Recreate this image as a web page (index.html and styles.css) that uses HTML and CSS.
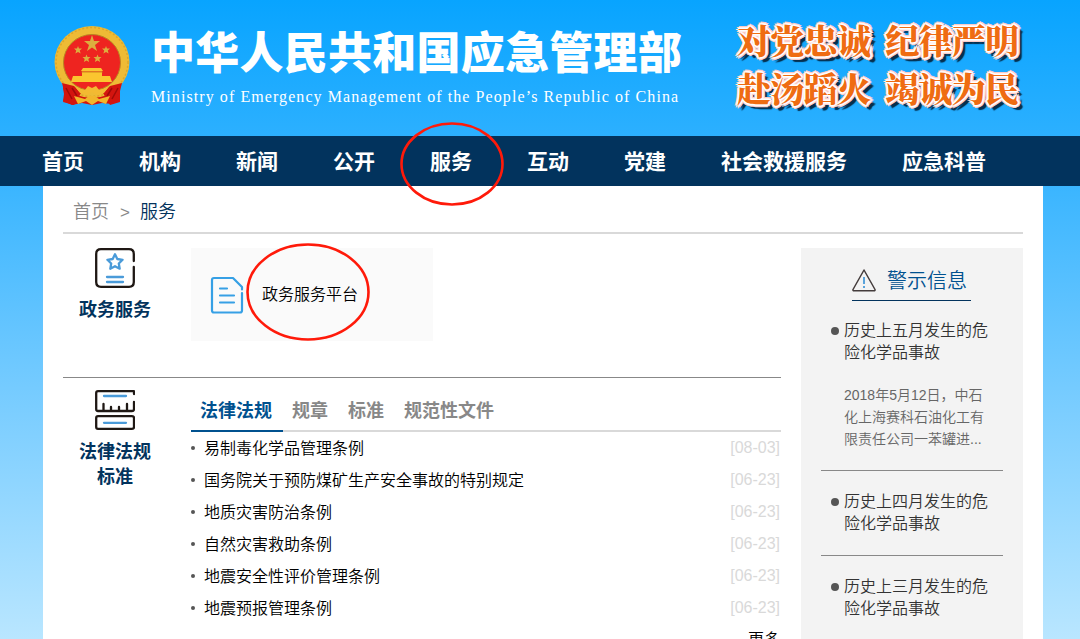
FILE: index.html
```html
<!DOCTYPE html>
<html lang="zh-CN">
<head>
<meta charset="utf-8">
<title>中华人民共和国应急管理部</title>
<link rel="stylesheet" href="styles.css">
</head>
<body>
<header class="header">
  <svg class="emblem" viewBox="0 0 76 80" width="76" height="80">
    <path d="M9 51L67 51L66 61L66 75L58 78L48 77L38 79L28 77L18 79L9 75L10 68L9 62Z" fill="#d3150f"/>
    <ellipse cx="38" cy="36" rx="37.500" ry="36" fill="#eebb35"/>
    <ellipse cx="38" cy="36" rx="36" ry="34.500" fill="none" stroke="#dca52a" stroke-width="1.500" stroke-dasharray="2 2"/>
    <ellipse cx="38" cy="36.500" rx="28.500" ry="28" fill="#ee2420" stroke="#b98521" stroke-width="1"/>
    <path d="M8 57L20 60L27 67L20 79L9 76L11 69ZM68 57L56 60L49 67L56 79L66 76L65 69Z" fill="#d3150f"/>
    <path d="M12 62L18 73M18 62L23 70M64 62L58 73M58 62L53 70" stroke="#a10b08" stroke-width="1.500"/>
    <g fill="#dcae3f">
      <path d="M38 9L40 15L46 15L41 19L43 25L38 21.500L33 25L35 19L30 15L36 15Z"/>
      <path d="M24 20l1 2.500h3l-2.200 2 .8 3-2.600-1.600-2.600 1.600.8-3-2.200-2h3zM52 20l1 2.500h3l-2.200 2 .8 3-2.600-1.600-2.600 1.600.8-3-2.200-2h3zM32.500 28.500l1 2.500h3l-2.200 2 .8 3-2.600-1.600-2.600 1.600.8-3-2.200-2h3zM43.500 28.500l1 2.500h3l-2.200 2 .8 3-2.600-1.600-2.600 1.600.8-3-2.200-2h3z"/>
    </g>
    <path d="M29 42H47L49 45H27ZM28 45.500H48V50H56L58 56H17L19 50H28Z" fill="#fbc52f"/>
    <path d="M27 46H49" stroke="#c67a1b" stroke-width=".8"/>
    <path d="M22 62L31 64L34 60L38 62L42 60L45 64L54 62L50 67L43 69L38 66L33 69L26 67Z" fill="#f3ba32"/>
    <path d="M20 70L31 73L35 70H41L45 73L56 70L52 78L44 75L38 79L32 75L24 78Z" fill="#f2b62c"/>
  </svg>
  <div class="brand">
    <h1 class="brand-name">中华人民共和国应急管理部</h1>
    <p class="brand-en">Ministry of Emergency Management of the People’s Republic of China</p>
  </div>
  <div class="slogan">
    <div class="slogan-row"><span>对党忠诚</span><span>纪律严明</span></div>
    <div class="slogan-row"><span>赴汤蹈火</span><span>竭诚为民</span></div>
  </div>
</header>
<nav class="nav">
  <a>首页</a><a>机构</a><a>新闻</a><a>公开</a><a class="marked">服务<svg class="ring ring-nav" viewBox="0 0 104 84" width="104" height="84"><ellipse cx="52" cy="42" rx="50.500" ry="40.500"/></svg></a><a>互动</a><a>党建</a><a>社会救援服务</a><a>应急科普</a>
</nav>
<main class="page">
  <div class="crumbs"><span>首页</span><span class="sep">&gt;</span><span class="here">服务</span></div>
  <div class="columns">
    <div class="content">
      <section class="block block-service">
        <div class="block-label">
          <svg viewBox="0 0 40 40" width="40" height="40" fill="none" stroke-width="2.300" stroke-linecap="round">
            <path d="M38.800 13V6Q38.800 1.200 34 1.200H6Q1.200 1.200 1.200 6V34Q1.200 38.800 6 38.800H34Q38.800 38.800 38.800 34V19" stroke="#1f1814"/>
            <path d="M20 6.300L22.300 11L27.600 11.800L23.800 15.500L24.700 20.700L20 18.200L15.300 20.700L16.200 15.500L12.400 11.800L17.700 11ZM12 29H28M12 34H28" stroke="#4a9bd9" stroke-linejoin="round"/>
          </svg>
          <span>政务服务</span>
        </div>
        <a class="card">
          <svg viewBox="0 0 34 38" width="34" height="38" fill="none" stroke="#36a0e5" stroke-width="2.200" stroke-linecap="round" stroke-linejoin="round">
            <path d="M32 13.500V11L23 2H4Q2 2 2 4V34.500Q2 36.500 4 36.500H30Q32 36.500 32 34.500V17M10 12.500H17M10 19.500H24M10 26.500H24"/>
          </svg>
          <span class="marked">政务服务平台<svg class="ring ring-card" viewBox="0 0 124 98" width="124" height="98"><ellipse cx="62" cy="49" rx="60.500" ry="47.500"/></svg></span>
        </a>
      </section>
      <section class="block block-law">
        <div class="block-label">
          <svg viewBox="0 0 40 40" width="40" height="40" fill="none" stroke-width="2.300" stroke-linecap="round" stroke-linejoin="round">
            <path d="M39 4V1.200H3Q1.200 1.200 1.200 3V19Q1.200 21 3 21H37Q39 21 39 19V12M8.500 14V20M16 17V20M24 17V20M32 14V20M3 26.200H37Q39 26.200 39 28V37Q39 38.800 37 38.800H3Q1.200 38.800 1.200 37V28Q1.200 26.200 3 26.200Z" stroke="#1f1814"/>
            <path d="M9 6H31M9 32.800H31" stroke="#4a9bd9"/>
          </svg>
          <span>法律法规<br>标准</span>
        </div>
        <div class="law">
          <div class="tabs"><a class="active">法律法规</a><a>规章</a><a>标准</a><a>规范性文件</a></div>
          <ul class="list">
            <li><a>易制毒化学品管理条例</a><time>[08-03]</time></li>
            <li><a>国务院关于预防煤矿生产安全事故的特别规定</a><time>[06-23]</time></li>
            <li><a>地质灾害防治条例</a><time>[06-23]</time></li>
            <li><a>自然灾害救助条例</a><time>[06-23]</time></li>
            <li><a>地震安全性评价管理条例</a><time>[06-23]</time></li>
            <li><a>地震预报管理条例</a><time>[06-23]</time></li>
          </ul>
          <a class="more">更多</a>
        </div>
      </section>
    </div>
    <aside class="side">
      <h2 class="side-title">
        <svg viewBox="0 0 24 23" width="24" height="23" fill="none" stroke-width="1.500" stroke-linejoin="round"><path d="M12 1L23 20.500Q23.300 21.800 22 21.800H2Q.7 21.800 1 20.500Z" stroke="#443c3c"/><path d="M12 8V15M12 17V19" stroke="#4a9bd9" stroke-width="1.800"/></svg>
        <span>警示信息</span>
      </h2>
      <article class="news"><h3>历史上五月发生的危险化学品事故</h3><p>2018年5月12日，中石化上海赛科石油化工有限责任公司一苯罐进...</p></article>
      <article class="news"><h3>历史上四月发生的危险化学品事故</h3></article>
      <article class="news"><h3>历史上三月发生的危险化学品事故</h3></article>
    </aside>
  </div>
</main>
</body>
</html>
```
FILE: styles.css
```css
* { box-sizing: border-box; margin: 0; padding: 0; }
html { height: 100%; overflow: hidden; }
body {
  height: 639px;
  overflow: hidden;
  background: linear-gradient(#08a4ff, #2cb0ff 136px, #70c9ff 370px, #b9e6ff 639px);
  font-family: "Liberation Sans", "Noto Sans CJK SC", sans-serif;
  font-size: 16px;
  color: #000;
}
svg { display: block; flex: none; }
.header { display: flex; height: 136px; padding-left: 54px; }
.emblem { margin-top: 26px; }
.brand { width: 560px; margin-left: 21px; padding-top: 21px; color: #fff; white-space: nowrap; }
.brand-name { font: 900 44px/58px "Noto Sans CJK SC", sans-serif; letter-spacing: .25px; }
.brand-en { margin-top: 7px; font: 16px/22px "Liberation Serif", serif; letter-spacing: 1.08px; }
.slogan { margin-left: 26px; padding-top: 16px; }
.slogan-row {
  display: flex;
  gap: 15px;
  height: 48px;
  font: 900 34px/48px "Noto Serif CJK SC", "Noto Sans CJK SC", serif;
  letter-spacing: -.7px;
  color: #ef6c12;
  white-space: nowrap;
  text-shadow: 1px 1px 0 #fff, -1px -1px 0 #fff, 1px -1px 0 #fff, -1px 1px 0 #fff,
    2px 0 0 #fff0ee, -2px 0 0 #fff0ee, 0 2px 0 #fff0ee, 0 -2px 0 #fff0ee,
    2px 2px 0 #fbcbc8, -2px -2px 0 #fbcbc8, 2px -2px 0 #fbcbc8, -2px 2px 0 #fbcbc8,
    3px 0 0 #fbcbc8, -3px 0 0 #fbcbc8, 0 3px 0 #fbcbc8, 0 -3px 0 #fbcbc8,
    5px 4px 1px #06304f, 4px 5px 1px #06304f, 3px 3px 1px #06304f;
}
.nav {
  display: flex;
  gap: 55px;
  height: 50px;
  padding-left: 42px;
  background: #02335d;
  color: #fff;
  font-size: 21px;
  font-weight: 700;
  line-height: 52px;
  white-space: nowrap;
}
.marked { position: relative; }
.ring { position: absolute; z-index: 2; fill: none; stroke: #ff1a0a; stroke-width: 2.6px; }
.ring-nav { left: -30px; top: -14px; }
.ring-card { left: -16px; top: -38px; }
.page { width: 1000px; height: 453px; margin-left: 43px; padding: 0 20px; background: #fff; }
.crumbs {
  display: flex;
  height: 48px;
  padding-left: 10px;
  border-bottom: 2px solid #d9d9d9;
  color: #888;
  font-size: 18px;
  font-weight: 350;
  line-height: 53px;
}
.sep { margin: 0 10px 0 11px; font-size: 17px; }
.here { color: #02335d; }
.columns { display: flex; gap: 20px; padding-top: 14px; }
.content { width: 718px; }
.block { display: flex; }
.block-service { height: 130px; border-bottom: 1px solid #888; }
.block-label {
  display: flex;
  flex-direction: column;
  align-items: center;
  gap: 10px;
  width: 104px;
  margin-right: 24px;
  color: #02335d;
  font-size: 18px;
  font-weight: 700;
  line-height: 25px;
  text-align: center;
}
.card {
  display: flex;
  align-items: center;
  gap: 18px;
  width: 242px;
  height: 93px;
  padding-left: 19px;
  background: #fafafa;
  font-weight: 350;
}
.card .marked { margin-top: -3px; }
.block-law { padding-top: 12px; }
.law { width: 590px; }
.tabs { display: flex; height: 42px; border-bottom: 2px solid #d9d9d9; color: #888; font-size: 18px; font-weight: 700; line-height: 42px; }
.tabs a { height: 42px; padding: 0 10px 0 9px; }
.tabs a + a { padding: 0 10px; }
.tabs .active { width: 92px; margin-right: -1px; border-bottom: 2px solid #00518f; color: #00518f; }
.list { list-style: none; }
.list li { display: flex; align-items: center; height: 32px; line-height: 32px; font-weight: 350; }
.list li::before { content: ""; width: 4px; height: 4px; margin: 0 9px 0 0; border-radius: 50%; background: #555; }
.list li a { padding-top: 2px; }
.list time { margin-left: auto; padding-right: 1px; color: #d9d9d9; font-weight: 400; }
.more { display: block; padding: 4px 1px 0 0; text-align: right; line-height: 24px; font-weight: 350; }
.side { width: 222px; height: 391px; padding: 0 20px; background: #f3f3f3; }
.side-title {
  display: flex;
  gap: 11px;
  align-items: center;
  width: 119px;
  height: 53px;
  margin-left: 31px;
  padding-top: 13px;
  border-bottom: 1px solid #02335d;
  color: #00518f;
  font-size: 20px;
  font-weight: 350;
  white-space: nowrap;
}
.side-title span { margin-top: -2px; }
.news { padding: 20px 14px 20px 23px; }
.side-title + .news { padding-top: 19px; }
.news + .news { border-top: 1px solid #888; }
.news h3 { position: relative; color: #333; font-size: 16px; font-weight: 350; line-height: 22px; }
.news h3::before { content: ""; position: absolute; left: -13px; top: 7px; width: 8px; height: 8px; border-radius: 50%; background: #555; }
.news p { width: 142px; margin-top: 20px; color: #666; font-size: 14px; line-height: 22px; font-weight: 350; }
```
